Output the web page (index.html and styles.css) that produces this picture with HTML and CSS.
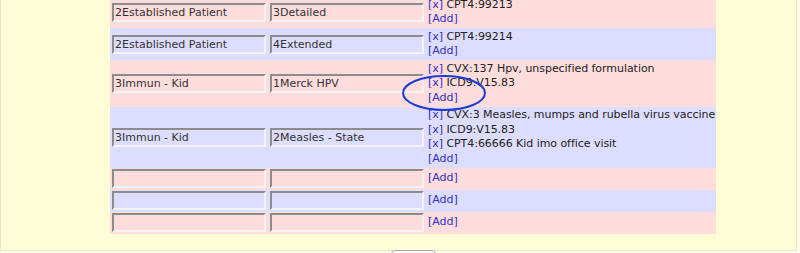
FILE: index.html
```html
<!DOCTYPE html>
<html lang="en">
<head>
    <meta charset="UTF-8">
    <title>Fee Sheet</title>
    <link rel="stylesheet" href="styles.css">
</head>
<body>
    <div class="page">
        <div class="panel">
            <table class="codes">
                <colgroup>
                    <col class="col-input">
                    <col class="col-input">
                    <col class="col-list">
                </colgroup>
                <tr class="odd">
                    <td><input type="text" value="2Established Patient"></td>
                    <td><input type="text" value="3Detailed"></td>
                    <td class="list">
                        <div><a href="#">[x]</a> CPT4:99213</div>
                        <div><a href="#">[Add]</a></div>
                    </td>
                </tr>
                <tr class="even">
                    <td><input type="text" value="2Established Patient"></td>
                    <td><input type="text" value="4Extended"></td>
                    <td class="list">
                        <div><a href="#">[x]</a> CPT4:99214</div>
                        <div><a href="#">[Add]</a></div>
                    </td>
                </tr>
                <tr class="odd">
                    <td><input type="text" value="3Immun - Kid"></td>
                    <td><input type="text" value="1Merck HPV"></td>
                    <td class="list">
                        <div><a href="#">[x]</a> CVX:137 Hpv, unspecified formulation</div>
                        <div><a href="#">[x]</a> ICD9:V15.83</div>
                        <div><a href="#">[Add]</a></div>
                    </td>
                </tr>
                <tr class="even">
                    <td><input type="text" value="3Immun - Kid"></td>
                    <td><input type="text" value="2Measles - State"></td>
                    <td class="list">
                        <div><a href="#">[x]</a> CVX:3 Measles, mumps and rubella virus vaccine</div>
                        <div><a href="#">[x]</a> ICD9:V15.83</div>
                        <div><a href="#">[x]</a> CPT4:66666 Kid imo office visit</div>
                        <div><a href="#">[Add]</a></div>
                    </td>
                </tr>
                <tr class="odd">
                    <td><input type="text" value=""></td>
                    <td><input type="text" value=""></td>
                    <td class="list"><a href="#">[Add]</a></td>
                </tr>
                <tr class="even">
                    <td><input type="text" value=""></td>
                    <td><input type="text" value=""></td>
                    <td class="list"><a href="#">[Add]</a></td>
                </tr>
                <tr class="odd">
                    <td><input type="text" value=""></td>
                    <td><input type="text" value=""></td>
                    <td class="list"><a href="#">[Add]</a></td>
                </tr>
            </table>
        </div>

        <div class="actions">
            <button type="button">Save</button>
        </div>

        <!-- hand-drawn annotation circling the [Add] link -->
        <svg class="mark" width="90" height="42" viewBox="0 0 90 42">
            <ellipse cx="44" cy="20" rx="41" ry="17" fill="none" stroke="#1b3bd6" stroke-width="2"/>
        </svg>
    </div>
</body>
</html>
```

FILE: styles.css
```css
* {
    margin: 0;
    padding: 0;
    box-sizing: border-box;
}

body {
    font-family: "DejaVu Sans", Verdana, sans-serif;
    font-size: 11px;
    background: #fdfde6;
    color: #222;
    height: 100vh;
    overflow: hidden;
}

.page {
    position: relative;
}

.panel {
    width: 797px;
    margin-top: -4px;
    padding: 0 0 16px 109px;
    background: #fffdd5;
    border: 1px solid #e6e6da;
    border-top: none;
}

.codes {
    border-collapse: collapse;
    border-spacing: 0;
    width: 606px;
    table-layout: fixed;
}

.col-input {
    width: 158px;
}

.col-list {
    width: 290px;
}

.codes .odd {
    background: #ffdddd;
}

.codes .even {
    background: #ddddff;
}

.codes td {
    padding: 1.5px 2px;
    vertical-align: middle;
    line-height: 14.5px;
}

.codes td.list {
    white-space: nowrap;
    letter-spacing: -0.05px;
}

.codes input {
    display: block;
    width: 154px;
    height: 19px;
    padding: 0 1px;
    font-family: "DejaVu Sans", Verdana, sans-serif;
    font-size: 11px;
    color: #333;
    background: transparent;
    border: 2px solid;
    border-color: #8c8c8c #f4f4f4 #f4f4f4 #8c8c8c;
}

.codes a {
    color: #3030c8;
    text-decoration: none;
}

.actions {
    padding-left: 391px;
    margin-top: -1px;
}

.actions button {
    width: 45px;
    height: 22px;
    background: #fff;
    border: 1px solid #a8a8a8;
    border-radius: 4px;
    font-family: "DejaVu Sans", Verdana, sans-serif;
    font-size: 11px;
}

.mark {
    position: absolute;
    left: 400px;
    top: 77px;
}
```
